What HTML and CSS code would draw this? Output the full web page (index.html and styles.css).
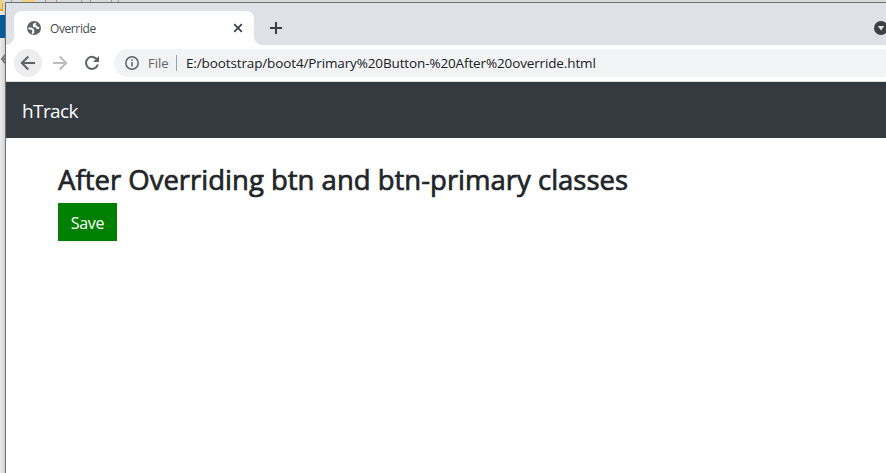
FILE: index.html
```
<!DOCTYPE html>
<html lang="en">
<head>
<meta charset="utf-8">
<title>Override</title>
<link rel="stylesheet" href="styles.css">
</head>
<body>
<div class="desktop">
  <svg class="behind" width="886" height="70" viewBox="0 0 886 70" aria-hidden="true">
    <path fill="#d9d9d9" d="M0 0h886v2H0z"/>
    <path fill="#f0d27a" d="M0 0h3v11H0zM23 0h12v2H23z"/>
    <path fill="#d9aa33" d="M0 9h3v2H0zM2 3h1v7H2z"/>
    <path fill="#999" d="M11 0h1v2h-1zM45 0h1v2h-1zM56 0h1v2h-1zM81 0h1v2h-1zM90 0h1v2h-1zM111 0h1v2h-1zM118 0h1v2h-1z"/>
    <path fill="#005a9e" d="M0 15h5v23H0z"/>
    <path fill="none" stroke="#777" stroke-width="2" d="M6 54l-4 5 4 5M2 59h4"/>
  </svg>
  <div class="window">
    <div class="tabstrip">
      <div class="tab">
        <svg class="globe" width="14" height="14" viewBox="0 0 14 14"><circle cx="7" cy="7" r="7" fill="#5f6368"/><path fill="none" stroke="#fff" stroke-width="2" stroke-linejoin="round" d="M1.500 7.500h3l1.700 1.500v2.500l-1.200.8M8.800 2.200L7 3.600v1.700h2.200l1 1.600h2"/></svg>
        <span class="tab-title">Override</span>
        <svg class="close" width="10" height="10" viewBox="0 0 10 10"><path d="M1.200 1.200l7.600 7.600M8.800 1.200L1.200 8.800"/></svg>
      </div>
      <svg class="plus" width="12" height="12" viewBox="0 0 12 12"><path d="M6 0v12M0 6h12"/></svg>
      <svg class="tabsearch" width="14" height="14" viewBox="0 0 14 14"><circle cx="7" cy="7" r="7" fill="#3c4043"/><path fill="#dee1e6" d="M3.800 5h6.400L7 9.500z"/></svg>
    </div>
    <div class="toolbar">
      <span class="nav back"><svg width="16" height="16" viewBox="0 0 16 16"><path d="M15 8H2M8.300 1.500L1.800 8l6.500 6.500"/></svg></span>
      <span class="nav forward"><svg width="16" height="16" viewBox="0 0 16 16"><path d="M1 8h13M7.700 1.500L14.200 8l-6.500 6.500"/></svg></span>
      <span class="nav reload"><svg width="16" height="16" viewBox="0 0 16 16"><path d="M13.200 4.800A6 6 0 1 0 13.800 9.500"/><path class="head" d="M15 1v6H9z"/></svg></span>
      <div class="omnibox">
        <svg class="info" width="14" height="14" viewBox="0 0 14 14"><circle cx="7" cy="7" r="6.200"/><path d="M7 6v4.500M7 3.300v1.500"/></svg>
        <span class="scheme">File</span>
        <span class="divider"></span>
        <span class="url">E:/bootstrap/boot4/Primary%20Button-%20After%20override.html</span>
      </div>
    </div>
    <nav class="navbar"><a class="brand">hTrack</a></nav>
    <main class="page">
      <h3>After Overriding btn and btn-primary classes</h3>
      <button class="btn">Save</button>
    </main>
  </div>
</div>
</body>
</html>
```
FILE: styles.css
```
* { box-sizing: border-box; }
body { margin: 0; font-family: "Open Sans", "Noto Sans", sans-serif; overflow: hidden; }
span, a, h3, button { white-space: nowrap; }
svg { display: block; flex: none; }
.desktop {
  position: relative;
  height: 473px;
  padding: 2px 0 0 5px;
  background: linear-gradient(90deg, #ececec 0, #d4d4d4 5px);
}
.behind { position: absolute; left: 0; top: 0; }
.window {
  position: relative;
  height: 471px;
  border-left: 1px solid #6e6e6e;
  border-top: 1px solid #6e6e6e;
  background: #fff;
}
.tabstrip { display: flex; height: 42px; padding: 8px 0 0 8px; background: #dee1e6; }
.tab {
  position: relative;
  display: flex;
  align-items: center;
  width: 240px;
  height: 34px;
  padding: 0 11px 0 13px;
  background: #fff;
  border-radius: 8px 8px 0 0;
}
.tab::before, .tab::after { content: ""; position: absolute; bottom: 0; width: 8px; height: 8px; }
.tab::before { left: -8px; background: radial-gradient(circle at 0 0, transparent 7.5px, #fff 8px); }
.tab::after { right: -8px; background: radial-gradient(circle at 100% 0, transparent 7.5px, #fff 8px); }
.tab-title { margin-left: 9px; font-size: 12px; letter-spacing: -0.4px; color: #45494d; }
.close { margin-left: auto; fill: none; stroke: #3c4043; stroke-width: 1.7; }
.plus { margin: 11px 0 0 16px; stroke: #3c4043; stroke-width: 2; }
.tabsearch { margin: 10px -2px 0 auto; }
.toolbar { display: flex; align-items: center; height: 37px; padding: 0 0 1px 8px; border-bottom: 1px solid #dadce0; }
.nav { display: flex; align-items: center; justify-content: center; width: 28px; height: 28px; margin-right: 4px; border-radius: 50%; }
.nav svg { fill: none; stroke: #5f6368; stroke-width: 2; }
.nav .head { fill: #5f6368; stroke: none; }
.back { background: #ededee; }
.forward svg { stroke: #babcbe; }
.omnibox { display: flex; align-items: center; flex: 1; height: 28px; margin-left: 4px; padding-left: 11px; border-radius: 14px 0 0 14px; background: #f1f3f4; }
.info { fill: none; stroke: #5f6368; stroke-width: 1.5; }
.scheme { width: 28px; margin-left: 9px; font-size: 13px; color: #5f6368; }
.divider { width: 1px; height: 16px; background: #9aa0a6; }
.url { margin-left: 9px; font-size: 13.5px; letter-spacing: -0.13px; color: #202124; }
.navbar { display: flex; align-items: center; height: 56px; padding: 2px 16px 0; background: #343a40; }
.brand { font-size: 19px; line-height: 30px; letter-spacing: -0.6px; color: #fff; }
.page { padding: 25px 52px; }
h3 { margin: 0 0 6px; font-size: 27.5px; line-height: 34px; font-weight: 400; letter-spacing: 0; -webkit-text-stroke: 0.7px #212529; color: #212529; }
.btn { display: block; width: 59px; height: 38px; padding: 2px 0 0; border: 0; background: #008000; color: #fff; font: 16px/24px "Open Sans", sans-serif; letter-spacing: -0.3px; }
```
